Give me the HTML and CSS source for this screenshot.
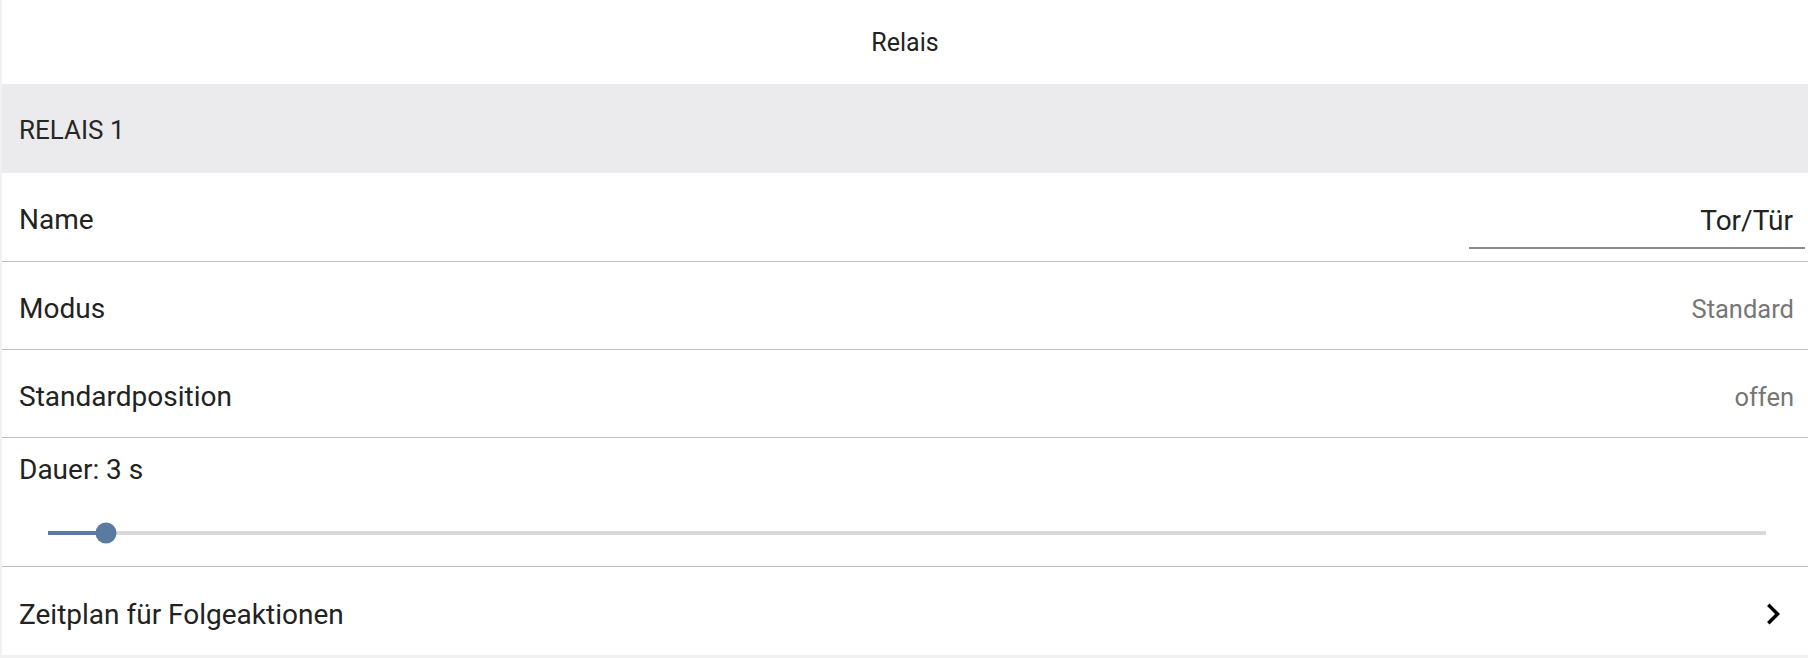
FILE: index.html
```html
<!DOCTYPE html>
<html lang="de">
<head>
<meta charset="utf-8">
<title>Relais</title>
<link rel="stylesheet" href="styles.css">
</head>
<body>
<div class="card">
  <div class="titlebar">Relais</div>
  <div class="section">RELAIS 1</div>
  <div class="row row-name">
    <span class="label">Name</span>
    <div class="field"><span class="field-text">Tor/Tür</span></div>
  </div>
  <div class="row">
    <span class="label">Modus</span>
    <span class="value">Standard</span>
  </div>
  <div class="row row-pos">
    <span class="label">Standardposition</span>
    <span class="value">offen</span>
  </div>
  <div class="row slider-row">
    <div class="label">Dauer: 3 s</div>
    <div class="slider">
      <div class="track">
        <div class="fill" style="width:3.39%"></div>
        <div class="thumb" style="left:3.39%"></div>
      </div>
    </div>
  </div>
  <div class="row row-last">
    <span class="label">Zeitplan für Folgeaktionen</span>
    <svg class="chevron" width="42" height="42" viewBox="0 0 24 24" aria-hidden="true"><path d="M10 6L8.59 7.41 13.17 12l-4.58 4.59L10 18l6-6z" fill="#000"/></svg>
  </div>
</div>
</body>
</html>
```
FILE: styles.css
```css
html, body {
  margin: 0;
  padding: 0;
}
body {
  background: #f1f1f1;
  font-family: Roboto, "Noto Sans", "Liberation Sans", sans-serif;
  color: #222222;
  width: 1808px;
  height: 658px;
  overflow: hidden;
}
.card {
  margin-left: 2px;
  width: 1806px;
  height: 655px;
  background: #ffffff;
  display: flex;
  flex-direction: column;
}
.titlebar {
  height: 84px;
  display: flex;
  align-items: center;
  justify-content: center;
  font-size: 25px;
  color: #222222;
  padding-top: 1px;
  box-sizing: border-box;
}
.section {
  height: 89px;
  background: #ebebed;
  display: flex;
  align-items: center;
  padding-left: 17px;
  padding-top: 4px;
  font-size: 26px;
  color: #262626;
  box-sizing: border-box;
}
.row {
  display: flex;
  align-items: center;
  justify-content: space-between;
  height: 89px;
  box-sizing: border-box;
  border-bottom: 1px solid #bdbdbd;
  padding-left: 17px;
  padding-right: 14px;
  padding-top: 6px;
}
.row-pos {
  height: 88px;
}
.label {
  font-size: 28px;
  color: #222222;
}
.value {
  font-size: 25.5px;
  color: #767676;
}
.row-name {
  padding-right: 3px;
}
.field {
  align-self: flex-end;
  width: 336px;
  margin-bottom: 12px;
  box-sizing: border-box;
  border-bottom: 2px solid #8c8c8c;
  display: flex;
  justify-content: flex-end;
  padding-right: 12px;
  padding-bottom: 10px;
}
.field-text {
  font-size: 28px;
  line-height: 33px;
  color: #222222;
}
.slider-row {
  height: 129px;
  flex-direction: column;
  align-items: stretch;
  justify-content: flex-start;
  padding-top: 15px;
}
.slider-row .label {
  line-height: 33px;
}
.slider {
  margin-top: 45px;
  margin-left: 29px;
  margin-right: 28px;
  height: 4px;
}
.track {
  position: relative;
  height: 4px;
  background: #d9d9d9;
}
.fill {
  height: 4px;
  background: #5a7aa0;
}
.thumb {
  position: absolute;
  top: 50%;
  width: 21px;
  height: 21px;
  border-radius: 50%;
  background: #5a7aa0;
  transform: translate(-50%, -50%);
}
.row-last {
  border-bottom: none;
  height: 88px;
}
.chevron {
  display: block;
  flex: none;
}
```
